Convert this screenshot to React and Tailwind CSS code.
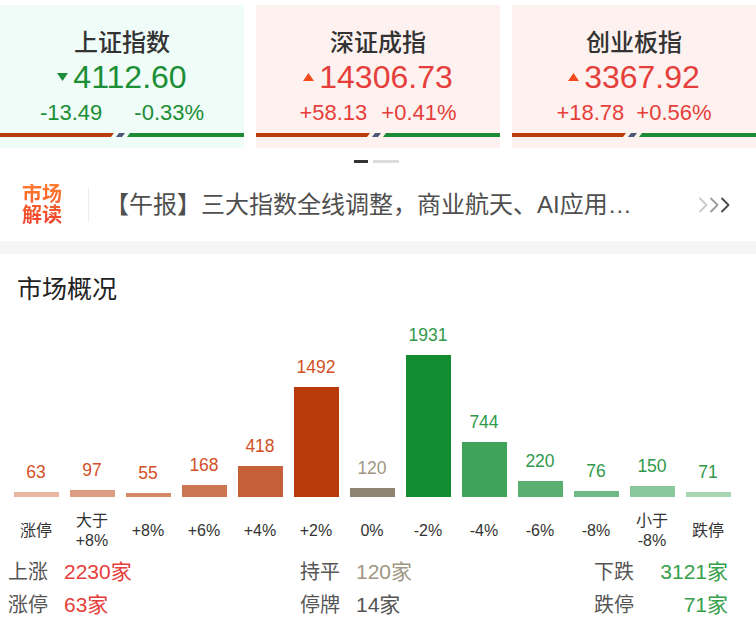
import React from 'react';

const FONT = { fontFamily: '"Liberation Sans", "Noto Sans CJK SC", sans-serif' };

const indices = [
  { name: '上证指数', value: '4112.60', chg: '-13.49', pct: '-0.33%', up: false, gap: 'gap-[32px]' },
  { name: '深证成指', value: '14306.73', chg: '+58.13', pct: '+0.41%', up: true, gap: 'gap-[14px]' },
  { name: '创业板指', value: '3367.92', chg: '+18.78', pct: '+0.56%', up: true, gap: 'gap-[12px]' },
];

const bars = [
  { v: 63, label: ['涨停'], bar: 'bg-[#e8b6a3]', text: 'text-[#d24f27]' },
  { v: 97, label: ['大于', '+8%'], bar: 'bg-[#dc9d82]', text: 'text-[#d24f27]' },
  { v: 55, label: ['+8%'], bar: 'bg-[#d48a66]', text: 'text-[#d24f27]' },
  { v: 168, label: ['+6%'], bar: 'bg-[#cd7652]', text: 'text-[#d24f27]' },
  { v: 418, label: ['+4%'], bar: 'bg-[#c6603a]', text: 'text-[#d24f27]' },
  { v: 1492, label: ['+2%'], bar: 'bg-[#b83a08]', text: 'text-[#d24f27]' },
  { v: 120, label: ['0%'], bar: 'bg-[#8f846f]', text: 'text-[#a09684]' },
  { v: 1931, label: ['-2%'], bar: 'bg-[#138b30]', text: 'text-[#30994a]' },
  { v: 744, label: ['-4%'], bar: 'bg-[#3fa35a]', text: 'text-[#30994a]' },
  { v: 220, label: ['-6%'], bar: 'bg-[#59af70]', text: 'text-[#30994a]' },
  { v: 76, label: ['-8%'], bar: 'bg-[#6fba85]', text: 'text-[#30994a]' },
  { v: 150, label: ['小于', '-8%'], bar: 'bg-[#89c89b]', text: 'text-[#30994a]' },
  { v: 71, label: ['跌停'], bar: 'bg-[#a6d7b1]', text: 'text-[#30994a]' },
];

const SplitBar = () => (
  <svg width="244" height="4" viewBox="0 0 244 4" className="block">
    <polygon points="0,0 114,0 111,4 0,4" fill="#b83c0c" />
    <polygon points="119,0 125,0 122,4 116,4" fill="#4b5876" />
    <polygon points="130,0 244,0 244,4 127,4" fill="#1d8a35" />
  </svg>
);

const Triangle = ({ up }) =>
  up ? (
    <svg width="11" height="8" viewBox="0 0 11 8"><polygon points="5.5,0 11,8 0,8" fill="#f24a1c" /></svg>
  ) : (
    <svg width="11" height="8" viewBox="0 0 11 8"><polygon points="0,0 11,0 5.5,8" fill="#1c8c3a" /></svg>
  );

const IndexCard = ({ item, first }) => (
  <div className={`w-[244px] shrink-0 pt-[23px] pb-[11px] flex flex-col items-center ${first ? 'bg-[#effcf8]' : 'bg-[#fdf2ef]'}`}>
    <div className="text-[24px] leading-[30px] font-medium text-[#333]">{item.name}</div>
    <div className="flex items-center gap-[5px] h-[38px]">
      <Triangle up={item.up} />
      <span className={`text-[32px] leading-[38px] ${item.up ? 'text-[#e63e3a]' : 'text-[#1b8e36]'}`}>{item.value}</span>
    </div>
    <div className={`flex ${item.gap} mt-1 text-[22px] leading-[26px] ${item.up ? 'text-[#e63e3a]' : 'text-[#1b8e36]'}`}>
      <span>{item.chg}</span>
      <span>{item.pct}</span>
    </div>
    <div className="mt-[7px] w-full">
      <SplitBar />
    </div>
  </div>
);

const Chevrons = () => (
  <svg width="34" height="16" viewBox="0 0 34 16" fill="none" strokeWidth="1.8" strokeLinecap="round" strokeLinejoin="round">
    <polyline points="1,1.5 7.5,8 1,14.5" stroke="#c9c9c9" />
    <polyline points="12,1.5 18.5,8 12,14.5" stroke="#9b9b9b" />
    <polyline points="23,1.5 29.5,8 23,14.5" stroke="#474747" />
  </svg>
);

const Stat = ({ label, value, color, right }) => (
  <div className="flex items-center h-[33px] text-[21px]">
    <span className="text-[#555] text-[20px] w-[42px]">{label}</span>
    <span className={`${color} ${right ? 'flex-1 text-right' : 'ml-[14px]'}`}>{value}</span>
  </div>
);

export default function App() {
  return (
    <div className="w-[756px] h-[632px] overflow-hidden bg-white" style={FONT}>
      <div className="flex gap-3 pt-[5px]">
        {indices.map((it, i) => (
          <IndexCard key={it.name} item={it} first={i === 0} />
        ))}
      </div>

      <div className="flex justify-center gap-[5px] mt-3 pr-[4px]">
        <div className="w-[14px] h-[3px] bg-[#333]" />
        <div className="w-[26px] h-[3px] bg-[#ddd]" />
      </div>

      <div className="flex items-center h-[78px] pt-[6px]">
        <div className="ml-[22px] text-[20px] leading-[21px] font-bold bg-linear-to-b from-[#ff7b2f] to-[#ee3a2a] bg-clip-text text-transparent">
          <div>市场</div>
          <div>解读</div>
        </div>
        <div className="ml-[26px] w-px h-[34px] bg-[#ececec]" />
        <div className="ml-[16px] text-[24px] text-[#4f4f4f] whitespace-nowrap">【午报】三大指数全线调整，商业航天、AI应用…</div>
        <div className="ml-auto mr-[23px] flex items-center">
          <Chevrons />
        </div>
      </div>

      <div className="h-[13px] bg-[#f5f5f5]" />

      <div className="pt-[17px] pl-[17px] text-[25px] leading-[36px] text-[#222]">市场概况</div>

      <div className="flex pl-2 h-[190px] items-end">
        {bars.map((b) => (
          <div key={b.label.join('')} className="w-[56px] flex flex-col items-center justify-end">
            <span className={`text-[17.5px] leading-5 mb-[10px] ${b.text}`}>{b.v}</span>
            <div className={`w-[45px] ${b.bar}`} style={{ height: Math.max(4, Math.round((b.v * 142) / 1931)) }} />
          </div>
        ))}
      </div>

      <div className="flex pl-2 mt-[14px]">
        {bars.map((b) => (
          <div key={b.label.join('')} className="w-[56px] h-10 flex flex-col items-center justify-center text-[16px] leading-5 text-[#333]">
            {b.label.map((l) => (
              <span key={l}>{l}</span>
            ))}
          </div>
        ))}
      </div>

      <div className="flex pl-2 mt-1">
        <div className="w-[292px]">
          <Stat label="上涨" value="2230家" color="text-[#e63e3a]" />
          <Stat label="涨停" value="63家" color="text-[#e63e3a]" />
        </div>
        <div className="w-[294px]">
          <Stat label="持平" value="120家" color="text-[#a09684]" />
          <Stat label="停牌" value="14家" color="text-[#555]" />
        </div>
        <div className="w-[134px]">
          <Stat label="下跌" value="3121家" color="text-[#36a04a]" right />
          <Stat label="跌停" value="71家" color="text-[#36a04a]" right />
        </div>
      </div>
    </div>
  );
}
